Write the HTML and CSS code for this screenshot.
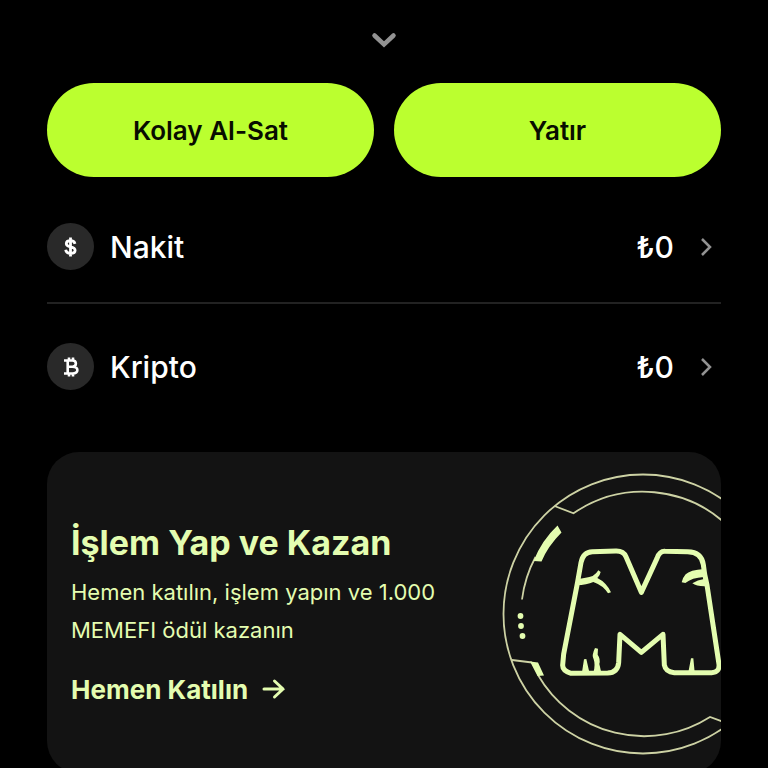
FILE: index.html
```html
<!DOCTYPE html>
<html lang="tr">
<head>
<meta charset="utf-8">
<meta name="viewport" content="width=device-width, initial-scale=1">
<title>Cüzdan</title>
<link rel="stylesheet" href="styles.css">
</head>
<body>
<main class="wallet">
  <button class="expand" type="button" aria-label="Genişlet">
    <svg width="28" height="20" viewBox="0 0 28 20" fill="none" stroke="currentColor" stroke-width="4.500" stroke-linecap="round"><path d="M4.500 5.500 14 14.500 23.500 5.500"/></svg>
  </button>
  <div class="actions">
    <button class="action" type="button">Kolay Al-Sat</button>
    <button class="action" type="button">Yatır</button>
  </div>
  <nav class="balances">
    <a class="balance" href="#nakit">
      <span class="coin"><svg width="24" height="24" viewBox="0 0 24 24" fill="none" stroke="currentColor" stroke-width="2.800"><path d="M11.500 2.500V21.500M16 8.800C15.500 6.800 13.800 5.700 11.500 5.700 9 5.700 7.300 6.800 7.300 8.700 7.300 10.900 9.500 11.400 11.500 11.800 13.900 12.300 16.100 13 16.100 15.200 16.100 17.200 14.200 18.300 11.500 18.300 8.700 18.300 7 17.100 6.700 14.800"/></svg></span>
      <span class="name">Nakit</span>
      <span class="amount">₺0</span>
      <svg class="chevron" width="14" height="22" viewBox="0 0 14 22" fill="none" stroke="currentColor" stroke-width="2.500"><path d="M3 3 11 11 3 19"/></svg>
    </a>
    <a class="balance" href="#kripto">
      <span class="coin"><svg width="24" height="24" viewBox="0 0 24 24" fill="none" stroke="currentColor" stroke-width="2.600"><path d="M5 5.500H13.500C18 5.500 18 11.700 13.500 11.700H9M13.500 11.700C20 11.700 20 18.500 13.500 18.500H5M8.700 5.500V18.500M10 2.500V5.500M14 2.500V5.500M10 18.500V21.500M14 18.500V21.500"/></svg></span>
      <span class="name">Kripto</span>
      <span class="amount">₺0</span>
      <svg class="chevron" width="14" height="22" viewBox="0 0 14 22" fill="none" stroke="currentColor" stroke-width="2.500"><path d="M3 3 11 11 3 19"/></svg>
    </a>
  </nav>
  <section class="promo">
    <div class="copy">
      <h2>İşlem Yap ve Kazan</h2>
      <p>Hemen katılın, işlem yapın ve 1.000 MEMEFI ödül kazanın</p>
      <a class="join" href="#katil">Hemen Katılın
        <svg width="24" height="24" viewBox="0 0 24 24" fill="none" stroke="currentColor" stroke-width="3" stroke-linecap="round"><path d="M2 11H21M12.500 3 21 11 12.500 19"/></svg>
      </a>
    </div>
    <svg class="art" width="231" height="321" viewBox="490 452 231 321" fill="none" aria-hidden="true">
      <g stroke="#cdd2a4" stroke-width="1.800">
        <circle cx="643" cy="614" r="139.500"/>
        <path d="M554.500 506 573.500 513.300A122.500 122.500 0 0 1 730 528M522 599.500A122.500 122.500 0 0 1 535.500 557M512 660 532 662.500M538 675A122.500 122.500 0 0 0 710 717L724 722"/>
      </g>
      <g fill="#e4fdb0">
        <path d="M557.500 525.500 561.500 532.500Q548 546 541.500 561.500L533.500 561Q542 540 557.500 525.500ZM530 661.500 538 662.500 544 675.500 537.500 676Z"/>
        <circle cx="520.500" cy="616" r="2.900"/><circle cx="521" cy="626" r="2.900"/><circle cx="522.500" cy="636" r="2.900"/>
      </g>
      <g transform="translate(545 530) scale(.33333)">
        <path d="M98 155 108 98Q114 66 142 65L212 63Q235 62 243 80L289 187 336 85Q344 63 360 64L428 65Q470 66 475 104L479 133 486 165 522 403Q524 427 500 428L388 428Q362 426 358 405L354 313 289 367 225 313 221 398Q218 428 188 429L78 430Q52 422 53 405L56 372Z" stroke="#e4fdb0" stroke-width="15" stroke-linejoin="round"/>
        <path d="M96 146Q124 145 143 138 154 132 160 121L167 126Q165 137 157 144 184 157 198 187L189 190Q174 166 145 156 126 164 94 166ZM478 117Q434 120 422 133 413 143 410 157L421 159Q441 143 476 141ZM477 147Q458 149 442 160 455 170 483 169ZM111 427 117 388 124 387 133 427ZM145 428Q152 405 146 388 139 376 150 354L159 356 158 374Q167 387 163 402L169 428ZM430 427 438 385 445 385 449 427Z" fill="#e4fdb0"/>
      </g>
    </svg>
  </section>
</main>
</body>
</html>
```
FILE: styles.css
```css
* {
  box-sizing: border-box;
}

body {
  margin: 0;
  height: 100vh;
  overflow: hidden;
  background: #000;
  color: #fff;
  font-family: Inter, "Liberation Sans", sans-serif;
}

button {
  border: 0;
  font: inherit;
  cursor: pointer;
}

a {
  color: inherit;
  text-decoration: none;
}

svg {
  display: block;
  flex: none;
}

.wallet {
  padding: 30px 47px 0;
}

.expand {
  display: block;
  margin: 0 auto;
  padding: 0;
  background: none;
  color: #929292;
}

.actions {
  display: grid;
  grid-template-columns: 1fr 1fr;
  gap: 20px;
  margin-top: 33px;
}

.action {
  height: 94px;
  border-radius: 47px;
  background: #bbff2f;
  color: #080d00;
  font-size: 26px;
  font-weight: 600;
}

.balances {
  margin-top: 14px;
}

.balance {
  display: flex;
  align-items: center;
  height: 125px;
  padding-right: 8px;
  font-size: 30px;
  font-weight: 500;
}

.balance:first-child {
  height: 113px;
  border-bottom: 2px solid #222;
}

.coin {
  display: grid;
  place-items: center;
  width: 47px;
  height: 47px;
  margin-right: 16px;
  border-radius: 50%;
  background: #292929;
}

.name {
  flex: 1;
}

.chevron {
  margin-left: 25px;
  color: #929292;
}

.promo {
  display: flex;
  justify-content: space-between;
  margin-top: 23px;
  overflow: hidden;
  border-radius: 32px;
  background: #131313;
  color: #e4fdb0;
}

.copy {
  flex: 1;
  padding: 70px 0 0 24px;
}

h2 {
  margin: 0;
  font-size: 34px;
  line-height: 42px;
  font-weight: 700;
}

p {
  max-width: 400px;
  margin: 9px 0 0;
  font-size: 22px;
  line-height: 38px;
}

.join {
  display: flex;
  align-items: center;
  gap: 14px;
  margin-top: 24px;
  font-size: 26px;
  line-height: 34px;
  font-weight: 700;
}
```
